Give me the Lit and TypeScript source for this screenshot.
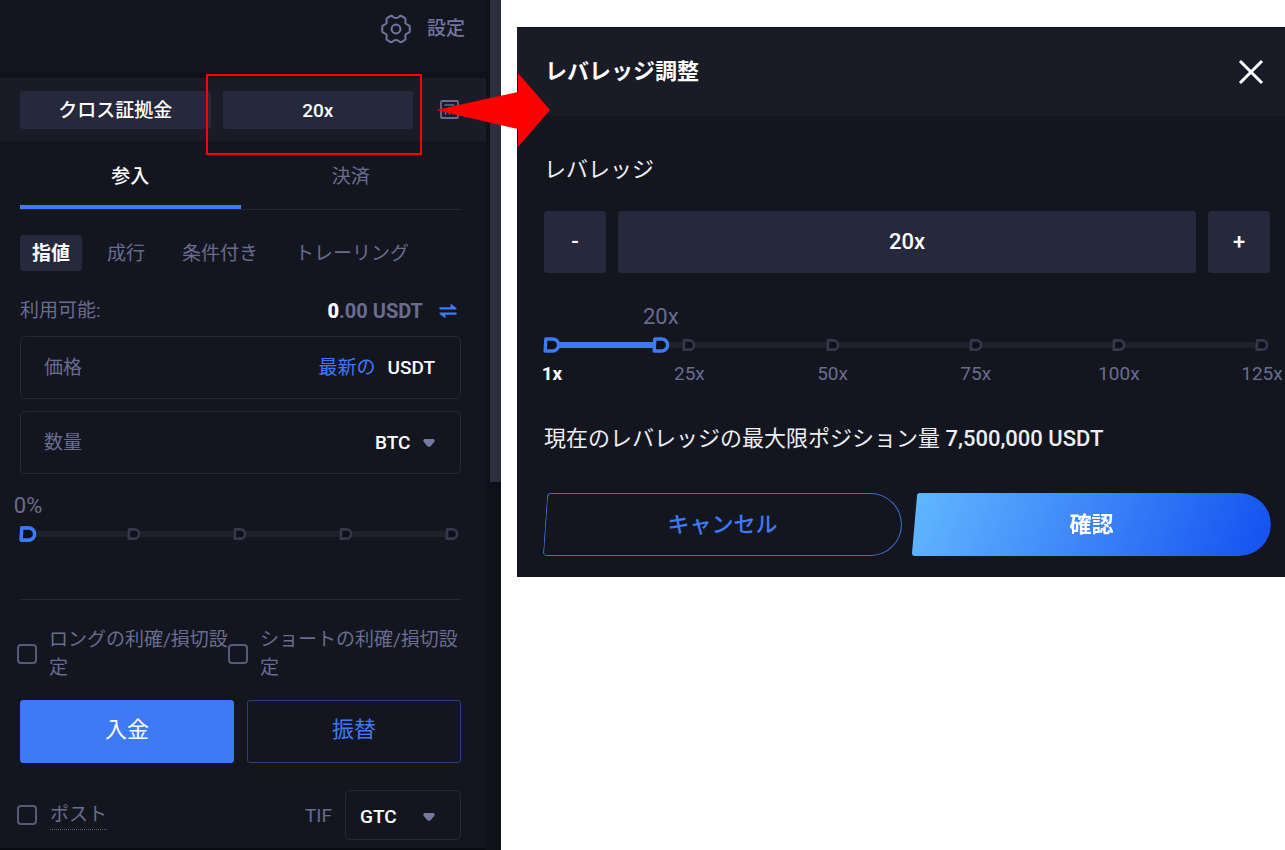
import { LitElement, html, css, svg, nothing } from "lit";
import { customElement, property, state } from "lit/decorators.js";
import { classMap } from "lit/directives/class-map.js";
import { styleMap } from "lit/directives/style-map.js";

const base = css`
  *,
  *::before,
  *::after {
    box-sizing: border-box;
  }
  button,
  input,
  select {
    font: inherit;
    color: inherit;
    margin: 0;
    padding: 0;
    border: 0;
    background: none;
    border-radius: 0;
    appearance: none;
    outline: none;
    min-width: 0;
  }
  button {
    cursor: pointer;
  }
  svg {
    display: block;
  }
`;

const caret = html`<svg class="caret" width="12" height="10" viewBox="0 0 12 10" aria-hidden="true">
  <path
    d="M2 1h8c1.500 0 2.200 1.800 1.200 2.900L7.800 7.900c-1 1.200-2.600 1.200-3.600 0L.8 3.900C-.2 2.800.5 1 2 1z"
    fill="#7479a2"
  />
</svg>`;

interface Stop {
  value: number;
  label?: string;
}

@customElement("stop-slider")
export class StopSlider extends LitElement {
  @property({ type: Number }) min = 0;
  @property({ type: Number }) max = 100;
  @property({ type: Number }) value = 0;
  @property() unit = "%";
  @property() name = "";
  @property({ attribute: false }) stops: Stop[] = [];

  static styles = [
    base,
    css`
      :host {
        display: block;
        color: #686c91;
      }
      .slider {
        position: relative;
        height: 58px;
        padding: 0 8px;
      }
      .rail {
        position: relative;
        height: 100%;
      }
      .line,
      .fill {
        position: absolute;
        top: 39px;
        left: 0;
        height: 6px;
        background: #1e202c;
      }
      .line {
        width: 100%;
      }
      .fill {
        background: #3d7af6;
      }
      .mark {
        position: absolute;
        top: 35px;
        width: 14px;
        height: 14px;
        margin-left: -7px;
      }
      .mark.on {
        top: 33px;
        width: 18px;
        height: 18px;
        margin-left: -9px;
      }
      .bubble,
      .tick {
        position: absolute;
        transform: translateX(-50%);
        white-space: nowrap;
      }
      .bubble {
        top: 0;
        font-size: 22px;
        line-height: 28px;
      }
      .tick {
        top: 58px;
        font-size: 19px;
        line-height: 26px;
      }
      .tick.on {
        color: #fff;
        font-weight: 700;
      }
      input {
        position: absolute;
        left: 0;
        top: 30px;
        width: 100%;
        height: 24px;
        opacity: 0;
        cursor: pointer;
      }
    `,
  ];

  private left(v: number) {
    return `${((v - this.min) / (this.max - this.min)) * 100}%`;
  }

  private mark(v: number, on: boolean) {
    return html`<svg
      class=${classMap({ mark: true, on })}
      style=${styleMap({ left: this.left(v) })}
      viewBox="0 0 18 18"
      aria-hidden="true"
    >
      ${svg`<path d="M2.800 3H9.600a6 6 0 0 1 0 12H2.200z" fill="#0f1118" stroke=${on ? "#3d7af6" : "#35384c"} stroke-width="3.400" stroke-linejoin="round"/>`}
    </svg>`;
  }

  private onInput(e: Event) {
    this.value = Number((e.target as HTMLInputElement).value);
    this.dispatchEvent(new CustomEvent("slide", { detail: this.value }));
  }

  render() {
    return html`<div class="slider">
      <div class="rail">
        <span class="line"></span>
        <span class="fill" style=${styleMap({ width: this.left(this.value) })}></span>
        ${this.stops.map((s) => this.mark(s.value, s.value <= this.value))} ${this.mark(this.value, true)}
        <output class="bubble" style=${styleMap({ left: this.left(this.value) })}>${this.value}${this.unit}</output>
        ${this.stops.map((s) =>
          s.label
            ? html`<span
                class=${classMap({ tick: true, on: s.value <= this.value })}
                style=${styleMap({ left: this.left(s.value) })}
                >${s.label}</span
              >`
            : nothing,
        )}
      </div>
      <input
        type="range"
        aria-label=${this.name}
        min=${this.min}
        max=${this.max}
        .value=${String(this.value)}
        @input=${this.onInput}
      />
    </div>`;
  }
}

@customElement("order-panel")
export class OrderPanel extends LitElement {
  @property({ type: Number }) leverage = 20;
  @state() private side = "参入";
  @state() private type = "指値";

  private stops: Stop[] = [0, 25, 50, 75, 100].map((value) => ({ value }));

  static styles = [
    base,
    css`
      :host {
        display: flex;
        width: 501px;
        min-height: 100vh;
        background: #0e1118;
        color: #686c91;
        font-size: 19px;
        line-height: 28px;
      }
      .content {
        flex: 1;
        margin-right: 4px;
        background: #14161f;
        border-bottom: 2px solid #0a0b10;
      }
      .scroll {
        width: 11px;
      }
      .thumb {
        height: 482px;
        background: #2c2e3e;
      }
      .head {
        display: flex;
        justify-content: flex-end;
        height: 72px;
        padding: 13px 21px 0 0;
      }
      .settings {
        display: flex;
        align-items: center;
        gap: 16px;
        height: 32px;
        color: #7176a0;
        font-weight: 500;
      }
      .mode {
        display: flex;
        align-items: center;
        gap: 12px;
        height: 69px;
        padding: 0 27px 0 20px;
        border-top: 6px solid #101219;
        background: #191b26;
        color: #fff;
        font-weight: 500;
      }
      .slot {
        flex: 1;
        position: relative;
      }
      .pill {
        width: 100%;
        height: 38px;
        padding-top: 2px;
        border-radius: 3px;
        background: #26283b;
      }
      .calc {
        margin-left: 15px;
      }
      .frame {
        position: absolute;
        left: -17px;
        right: -9px;
        top: -17px;
        height: 81px;
        border: 2px solid #f00;
        pointer-events: none;
      }
      .arrow {
        position: absolute;
        left: 100%;
        top: -19px;
        margin-left: 23px;
        pointer-events: none;
        z-index: 2;
      }
      .body {
        padding: 0 25px 0 20px;
      }
      .tabs {
        display: flex;
        height: 69px;
        border-bottom: 1px solid #242639;
      }
      .tab {
        flex: 1;
        padding-top: 8px;
        border-bottom: 4px solid transparent;
      }
      .tab.on {
        border-color: #3d7af6;
        color: #fff;
        font-weight: 500;
      }
      .types {
        display: flex;
        gap: 13px;
        margin-top: 25px;
      }
      .type {
        height: 36px;
        padding: 2px 12px 0;
        border-radius: 3px;
        white-space: nowrap;
      }
      .type.on {
        background: #26283b;
        color: #fff;
        font-weight: 700;
      }
      .avail {
        display: flex;
        align-items: center;
        height: 28px;
        margin: 26px 4px 11px 0;
      }
      .amount {
        margin-left: auto;
        margin-right: 16px;
        font-size: 20px;
        font-weight: 700;
      }
      .amount b {
        color: #fff;
      }
      .field {
        display: flex;
        align-items: center;
        height: 63px;
        margin-bottom: 12px;
        padding: 0 25px 0 23px;
        border: 1px solid #242639;
        border-radius: 5px;
      }
      .field input {
        flex: 1;
      }
      .field input::placeholder {
        color: #686c91;
        opacity: 1;
      }
      .latest {
        color: #3d7af6;
        margin-right: 12px;
      }
      .unit,
      select {
        color: #fff;
        font-weight: 500;
      }
      .select {
        display: grid;
        align-items: center;
      }
      .select > * {
        grid-area: 1 / 1;
      }
      .select .caret {
        justify-self: end;
        pointer-events: none;
      }
      .select select {
        width: 100%;
        height: 28px;
        padding-right: 24px;
      }
      stop-slider {
        margin: 18px 1px 0 0;
      }
      .rule {
        height: 1px;
        margin: 49px 0 26px;
        border: 0;
        background: #242639;
      }
      .checks {
        display: flex;
        margin-left: -3px;
      }
      .check {
        display: flex;
        align-items: center;
        gap: 13px;
      }
      .checks .check {
        flex: 1;
        gap: 12px;
      }
      .checks .check:first-child {
        flex: 0 0 211px;
      }
      .box {
        flex: none;
        width: 20px;
        height: 20px;
        border: 2px solid #565a7c;
        border-radius: 4px;
      }
      .box:checked {
        background: #3d7af6;
        border-color: #3d7af6;
      }
      .money {
        display: grid;
        grid-template-columns: 1fr 1fr;
        gap: 13px;
        margin-top: 18px;
        font-size: 22px;
      }
      .money button {
        height: 63px;
        padding-bottom: 3px;
        border: 1px solid #23427f;
        border-radius: 3px;
        color: #3d7af6;
      }
      .money .deposit {
        background: #3d7af6;
        border-color: #3d7af6;
        color: #fff;
      }
      .foot {
        display: flex;
        align-items: center;
        margin: 27px 0 8px -3px;
      }
      .post {
        border-bottom: 1px dotted #565a7c;
      }
      .tif {
        margin-left: auto;
        margin-right: 13px;
        padding-top: 2px;
      }
      .foot .select {
        width: 116px;
        height: 50px;
        padding: 3px 25px 0 14px;
        border: 1px solid #242639;
        border-radius: 5px;
      }
    `,
  ];

  render() {
    return html`
      <div class="content">
        <div class="head">
          <button class="settings">
            <svg width="30" height="32" viewBox="1 0 30 32" fill="none" stroke="#7176a0" stroke-width="2" aria-hidden="true">
              <path
                stroke-linejoin="round"
                d="M12.800 3.600c-.8-.9-1.600-.9-2.600-.4L7.400 4.800c-1 .6-1.200 1.300-.9 2.400.8 2.500-.3 4.200-2.400 4.700C2.900 12.200 2.200 12.800 2.200 14v4c0 1.200.7 1.800 1.900 2.100 2.100.5 3.200 2.200 2.400 4.700-.3 1.100-.1 1.800.9 2.400l2.800 1.600c1 .5 1.800.5 2.600-.4 1.900-2 4.500-2 6.400 0 .8.9 1.600.9 2.600.4l2.800-1.600c1-.6 1.200-1.300.9-2.400-.8-2.500.3-4.200 2.400-4.700 1.200-.3 1.900-.9 1.900-2.100v-4c0-1.200-.7-1.800-1.900-2.100-2.100-.5-3.200-2.200-2.400-4.700.3-1.100.1-1.800-.9-2.400l-2.800-1.600c-1-.5-1.800-.5-2.600.4-1.900 2-4.500 2-6.400 0z"
              />
              <circle cx="16" cy="16" r="4.400" />
            </svg>
            設定
          </button>
        </div>
        <div class="mode">
          <div class="slot"><button class="pill">クロス証拠金</button></div>
          <div class="slot">
            <button class="pill">${this.leverage}x</button>
            <span class="frame"></span>
            <svg class="arrow" width="114" height="76" viewBox="0 0 114 76" aria-hidden="true">
              <path d="M0 38L82 20V1l32 37-32 37V57z" fill="#f00" />
            </svg>
          </div>
          <button class="calc" aria-label="計算機">
            <svg width="19" height="19" viewBox="0 0 19 19" fill="none" stroke="#666b90" aria-hidden="true">
              <rect x="1" y="1" width="17" height="17" rx="1" stroke-width="1.800" />
              <path d="M4.500 5h10M5.500 8.500v6M9.500 8.500v6M13.500 8.500v6M4.500 9h10" stroke-width="1.600" />
            </svg>
          </button>
        </div>
        <div class="body">
          <div class="tabs" role="tablist">
            ${["参入", "決済"].map(
              (t) =>
                html`<button
                  role="tab"
                  aria-selected=${t === this.side}
                  class=${classMap({ tab: true, on: t === this.side })}
                  @click=${() => (this.side = t)}
                >
                  ${t}
                </button>`,
            )}
          </div>
          <div class="types">
            ${["指値", "成行", "条件付き", "トレーリング"].map(
              (t) =>
                html`<button class=${classMap({ type: true, on: t === this.type })} @click=${() => (this.type = t)}>
                  ${t}
                </button>`,
            )}
          </div>
          <div class="avail">
            <span>利用可能:</span>
            <span class="amount"><b>0</b>.00 USDT</span>
            <button aria-label="振替">
              <svg width="18" height="14" viewBox="0 0 18 14" fill="#3d7af6" aria-hidden="true">
                <path d="M.5 3.200h11V.4c0-.5.4-.6.700-.3l5.100 3.900c.5.500.3 1.400-.4 1.400H.5zM17.500 10.800h-11v2.800c0 .5-.4.6-.7.3L.7 10C.2 9.500.4 8.600 1.100 8.600h16.400z" />
              </svg>
            </button>
          </div>
          <div class="field">
            <input type="text" aria-label="価格" placeholder="価格" />
            <button class="latest">最新の</button>
            <span class="unit">USDT</span>
          </div>
          <div class="field">
            <input type="text" aria-label="数量" placeholder="数量" />
            <div class="select">
              <select aria-label="数量の単位">
                <option>BTC</option>
              </select>
              ${caret}
            </div>
          </div>
          <stop-slider name="数量の割合" .stops=${this.stops}></stop-slider>
          <hr class="rule" />
          <div class="checks">
            <label class="check"><input class="box" type="checkbox" /><span>ロングの利確/損切設定</span></label>
            <label class="check"><input class="box" type="checkbox" /><span>ショートの利確/損切設定</span></label>
          </div>
          <div class="money">
            <button class="deposit">入金</button>
            <button>振替</button>
          </div>
          <div class="foot">
            <label class="check"><input class="box" type="checkbox" /><span class="post">ポスト</span></label>
            <label class="tif" for="tif">TIF</label>
            <div class="select">
              <select id="tif">
                <option>GTC</option>
              </select>
              ${caret}
            </div>
          </div>
        </div>
      </div>
      <div class="scroll"><div class="thumb"></div></div>
    `;
  }
}

@customElement("leverage-dialog")
export class LeverageDialog extends LitElement {
  @property({ type: Number }) leverage = 20;

  private stops: Stop[] = [1, 25, 50, 75, 100, 125].map((value) => ({ value, label: `${value}x` }));

  static styles = [
    base,
    css`
      :host {
        display: block;
        background: #14161f;
        color: #fff;
        font-size: 22px;
        line-height: 32px;
      }
      header {
        display: flex;
        align-items: center;
        justify-content: space-between;
        height: 89px;
        padding: 0 21px 0 28px;
        background: #191b26;
        border-top: 1px solid #101219;
      }
      h2 {
        margin: 0;
        font-size: 22px;
        font-weight: 700;
      }
      .body {
        padding: 38px 15px 21px 27px;
      }
      .label {
        display: block;
        color: #eceef2;
      }
      .stepper {
        display: flex;
        gap: 12px;
        height: 62px;
        margin: 25px 0 30px;
        font-weight: 500;
      }
      .stepper > * {
        border-radius: 3px;
        background: #26283b;
        text-align: center;
      }
      .step {
        flex: 0 0 62px;
      }
      .value {
        flex: 1;
      }
      .limit {
        margin: 62px 0 38px;
        color: #eceef2;
        font-weight: 500;
      }
      .jp {
        font-weight: 400;
      }
      .actions {
        display: grid;
        grid-template-columns: 1fr 1fr;
        gap: 10px;
        margin: 0 -1px;
        font-weight: 700;
      }
      .actions button {
        height: 63px;
      }
      .cancel {
        position: relative;
        color: #3d7af6;
        font-weight: 500;
      }
      .cancel::before,
      .cancel::after {
        content: "";
        position: absolute;
        top: 0;
        bottom: 0;
        border: 1px solid #3a70dd;
      }
      .cancel::before {
        left: 2px;
        width: 50%;
        border-right: 0;
        border-radius: 4px 0 0 4px;
        transform: skewX(-4deg);
      }
      .cancel::after {
        left: calc(50% - 6px);
        right: 0;
        border-left: 0;
        border-radius: 0 32px 32px 0;
      }
      .confirm {
        border-radius: 0 32px 32px 0;
        background: linear-gradient(110deg, #62b8ff, #1450f0);
        mask:
          url("data:image/svg+xml,%3Csvg xmlns='http://www.w3.org/2000/svg' width='40' height='63'%3E%3Cpath d='M40 0H8Q5 0 5 3L0 60Q0 63 3 63H40z'/%3E%3C/svg%3E")
            left / 40px 100% no-repeat,
          linear-gradient(#000, #000) right / calc(100% - 39px) 100% no-repeat;
      }
    `,
  ];

  private change(value: number) {
    this.dispatchEvent(new CustomEvent("leverage", { detail: Math.min(125, Math.max(1, value)) }));
  }

  render() {
    return html`
      <header>
        <h2>レバレッジ調整</h2>
        <button aria-label="閉じる">
          <svg width="26" height="26" viewBox="0 0 26 26" fill="none" stroke="#fff" stroke-width="3" aria-hidden="true">
            <path d="M2 2l22 22M24 2L2 24" />
          </svg>
        </button>
      </header>
      <div class="body">
        <label class="label" for="leverage">レバレッジ</label>
        <div class="stepper">
          <button class="step" @click=${() => this.change(this.leverage - 1)}>-</button>
          <input
            id="leverage"
            class="value"
            type="text"
            .value=${`${this.leverage}x`}
            @change=${(e: Event) => this.change(parseInt((e.target as HTMLInputElement).value, 10) || 1)}
          />
          <button class="step" @click=${() => this.change(this.leverage + 1)}>+</button>
        </div>
        <stop-slider
          name="レバレッジ"
          unit="x"
          min="1"
          max="125"
          .value=${this.leverage}
          .stops=${this.stops}
          @slide=${(e: CustomEvent) => this.change(e.detail)}
        ></stop-slider>
        <p class="limit"><span class="jp">現在のレバレッジの最大限ポジション量</span> 7,500,000 USDT</p>
        <div class="actions">
          <button class="cancel">キャンセル</button>
          <button class="confirm">確認</button>
        </div>
      </div>
    `;
  }
}

@customElement("app-root")
export class AppRoot extends LitElement {
  @state() private leverage = 20;

  static styles = css`
    :host {
      display: flex;
      align-items: flex-start;
      gap: 16px;
      min-height: 100vh;
      background: #fff;
      font-family: Roboto, "Noto Sans CJK JP", sans-serif;
      overflow: hidden;
    }
    order-panel {
      flex: none;
      position: relative;
      z-index: 1;
    }
    leverage-dialog {
      flex: 1;
      min-width: 0;
      margin-top: 27px;
    }
  `;

  render() {
    return html`
      <order-panel .leverage=${this.leverage}></order-panel>
      <leverage-dialog
        .leverage=${this.leverage}
        @leverage=${(e: CustomEvent) => (this.leverage = e.detail)}
      ></leverage-dialog>
    `;
  }
}
